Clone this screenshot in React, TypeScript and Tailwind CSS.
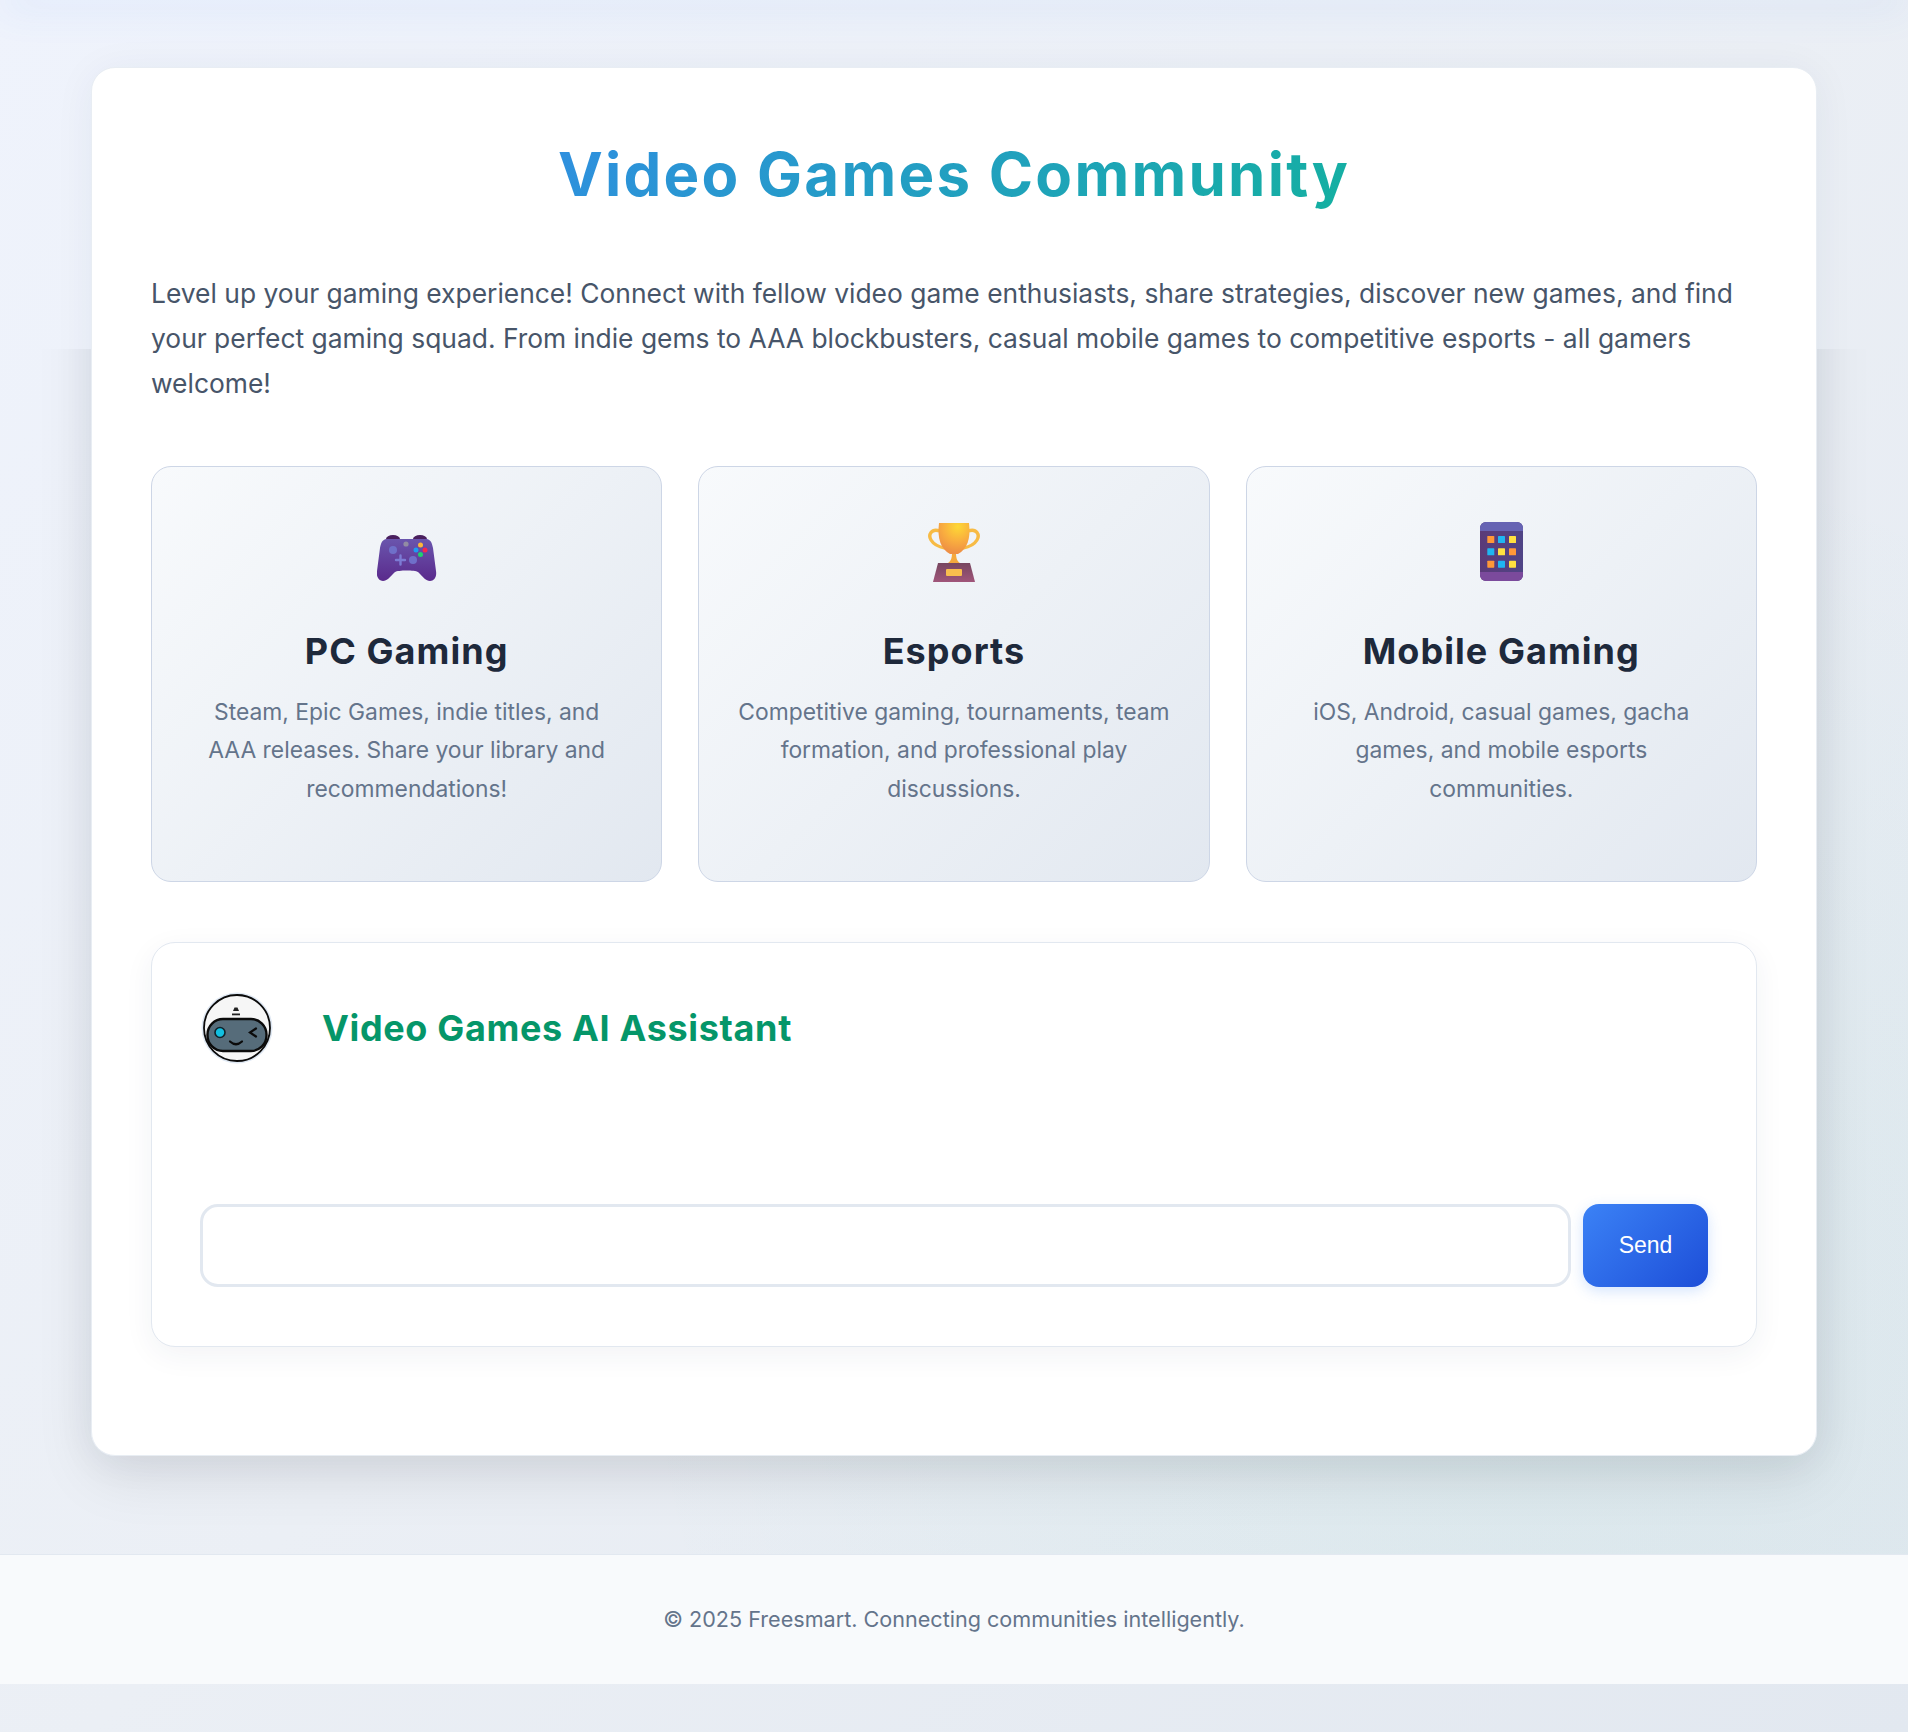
const sans = "font-['Inter',sans-serif]";

function GamepadIcon() {
  return (
    <svg viewBox="0 0 60 47" className="h-[47px] w-[60px]">
      <defs>
        <linearGradient id="padBody" x1="0" y1="0" x2="0" y2="1">
          <stop offset="0" stopColor="#6a55ad" />
          <stop offset="1" stopColor="#5a2a8c" />
        </linearGradient>
      </defs>
      <ellipse cx="16" cy="4" rx="7" ry="4" fill="#4a1f5e" />
      <ellipse cx="43" cy="4" rx="7" ry="4" fill="#4a1f5e" />
      <path
        d="M9 4 H50 C54 5 55 8 56 13 L59 36 C60 42 57 46 53 46 C49 46 46 42 41 37 C38 35 21 35 18 37 C13 42 10 46 6 46 C2 46 -1 42 0 36 L3 13 C4 8 5 5 9 4 Z"
        fill="url(#padBody)"
      />
      <circle cx="16" cy="15" r="4" fill="#6f70c9" />
      <circle cx="29" cy="9" r="2.6" fill="#928ca3" />
      <circle cx="36" cy="25" r="4" fill="#6f70c9" />
      <path d="M23.5 20.5 V29.5 M19 25 H28" stroke="#7c7bd4" strokeWidth="2.4" strokeLinecap="round" />
      <circle cx="43.5" cy="10" r="2.5" fill="#fcb73a" />
      <circle cx="39" cy="15" r="2.5" fill="#1f9bf0" />
      <circle cx="48" cy="15" r="2.5" fill="#f8254f" />
      <circle cx="43.5" cy="19.5" r="2.5" fill="#1fd16f" />
    </svg>
  );
}

function TrophyIcon() {
  return (
    <svg viewBox="0 0 66 64" className="h-[64px] w-[66px]">
      <defs>
        <radialGradient id="cup" cx="0.62" cy="0.12" r="0.85">
          <stop offset="0" stopColor="#fdd835" />
          <stop offset="0.55" stopColor="#f9ae3f" />
          <stop offset="1" stopColor="#ee8f45" />
        </radialGradient>
        <linearGradient id="plinth" x1="0" y1="0" x2="0" y2="1">
          <stop offset="0" stopColor="#77465f" />
          <stop offset="1" stopColor="#a0557a" />
        </linearGradient>
      </defs>
      <path d="M19 10 C10 7 7 14 10 19 C13 24 18 26 24 27" fill="none" stroke="#f7bb45" strokeWidth="3.4" />
      <path d="M47 10 C56 7 59 14 56 19 C53 24 48 26 42 27" fill="none" stroke="#f7bb45" strokeWidth="3.4" />
      <path d="M25 43 C30 41 31 37 31 32 H35 C35 37 36 41 41 43 Z" fill="#f5a83d" />
      <path d="M18 2 H48 C50 18 46 28 37 33 H29 C20 28 16 18 18 2 Z" fill="url(#cup)" />
      <path d="M17 42 H49 L54 61 H12 Z" fill="url(#plinth)" />
      <rect x="25" y="48" width="16" height="7" rx="1" fill="#f9bd4e" />
    </svg>
  );
}

function TabletIcon() {
  const cells = [
    ["#ff9838", "#1fb6f2", "#ffe040"],
    ["#1fb6f2", "#ffe040", "#ff9838"],
    ["#ff9838", "#1fb6f2", "#ffe040"],
  ];
  const xs = [7.3, 18, 29];
  const ys = [14, 26.3, 38.7];
  return (
    <svg viewBox="0 0 43 59" className="h-[59px] w-[43px]">
      <defs>
        <linearGradient id="slate" x1="0" y1="0" x2="1" y2="0">
          <stop offset="0" stopColor="#5b3a78" />
          <stop offset="1" stopColor="#4f4486" />
        </linearGradient>
        <clipPath id="slateClip">
          <rect width="43" height="59" rx="6" />
        </clipPath>
      </defs>
      <g clipPath="url(#slateClip)">
        <rect width="43" height="59" fill="url(#slate)" />
        <rect width="43" height="9" fill="#6663b3" />
        <rect y="50" width="43" height="9" fill="#7b4a9c" />
      </g>
      {cells.map((row, r) =>
        row.map((color, c) => (
          <rect key={`${r}-${c}`} x={xs[c]} y={ys[r]} width="7" height="7" rx="0.6" fill={color} />
        )),
      )}
    </svg>
  );
}

function BotAvatar() {
  return (
    <svg viewBox="0 0 72 72" className="h-[72px] w-[72px]">
      <circle cx="36" cy="36" r="35.5" fill="#dfe8f3" />
      <circle cx="36" cy="36" r="33" fill="#f6f6f6" stroke="#0b0b0b" strokeWidth="1.8" />
      <path d="M33.5 15.5 H36.5 L38 19 H32 Z" fill="#222" />
      <rect x="31" y="21.5" width="8" height="1.8" fill="#222" />
      <rect x="6.5" y="27" width="59" height="32" rx="15.5" fill="#566c7a" stroke="#0b0b0b" strokeWidth="2.4" />
      <circle cx="19" cy="40.5" r="5" fill="#12bfe0" stroke="#10222b" strokeWidth="1.6" />
      <path d="M55 36.5 L49 40.5 L55 44.5" fill="none" stroke="#0b0b0b" strokeWidth="2.2" strokeLinecap="round" />
      <path d="M29 49.5 Q35 55 41 49.5" fill="none" stroke="#0b0b0b" strokeWidth="2.2" strokeLinecap="round" />
    </svg>
  );
}

const features = [
  {
    icon: <GamepadIcon />,
    title: "PC Gaming",
    text: "Steam, Epic Games, indie titles, and AAA releases. Share your library and recommendations!",
    iconClass: "pt-[14px]",
  },
  {
    icon: <TrophyIcon />,
    title: "Esports",
    text: "Competitive gaming, tournaments, team formation, and professional play discussions.",
    iconClass: "pt-0",
  },
  {
    icon: <TabletIcon />,
    title: "Mobile Gaming",
    text: "iOS, Android, casual games, gacha games, and mobile esports communities.",
    iconClass: "pt-px",
  },
];

export default function App() {
  return (
    <div className={`${sans} relative min-h-[1732px] bg-[linear-gradient(135deg,#eff3fc_0%,#ebeff5_50%,#e2e8f0_100%)]`}>
      <div className="absolute -top-[10px] left-0 h-[10px] w-full shadow-[0_4px_40px_rgba(59,130,246,0.2)]" />
      <div className="bg-[radial-gradient(circle_at_80%_85%,rgba(16,185,129,0.05),transparent_45%)] px-[91px] pb-[98px] pt-[67px]">
        <div className="relative">
          <div className="absolute inset-0 rounded-[24px] shadow-[0_20px_60px_rgba(0,0,0,0.09)] [clip-path:inset(282px_-120px_-120px_-120px_round_0)]" />
          <main className="relative h-[1389px] rounded-[24px] border border-[#e8edf3] bg-white px-[59px] pt-[64px] shadow-[0_4px_40px_rgba(30,50,90,0.06)]">
            <div className="text-center">
              <h1 className="inline-block bg-[linear-gradient(135deg,#2f8fe0,#14b0a0)] bg-clip-text text-[60px] font-bold leading-[84px] tracking-[2.25px] text-transparent">
                Video Games Community
              </h1>
            </div>
            <p className="mt-[55px] text-[26.4px] leading-[45px] text-[#475569]">
              Level up your gaming experience! Connect with fellow video game enthusiasts, share strategies, discover new
              games, and find your perfect gaming squad. From indie gems to AAA blockbusters, casual mobile games to
              competitive esports - all gamers welcome!
            </p>

            <div className="mt-[60px] grid grid-cols-3 gap-[36px]">
              {features.map((f) => (
                <section
                  key={f.title}
                  className="flex h-[416px] flex-col items-center rounded-[20px] border border-[#cdd6e6] bg-[linear-gradient(135deg,#f8fafc,#e2e8f0)] px-[38px] pt-[54px] text-center"
                >
                  <div className={`h-[64px] ${f.iconClass}`}>{f.icon}</div>
                  <h3 className="mt-[40px] text-[36px] font-bold leading-[52px] tracking-[1.05px] text-[#1e293b]">
                    {f.title}
                  </h3>
                  <p className="mt-[16px] text-[22.85px] leading-[38.4px] text-[#64748b]">{f.text}</p>
                </section>
              ))}
            </div>

            <section className="mt-[60px] h-[405px] rounded-[24px] border border-[#e2e8f0] bg-white px-[48px] pt-[49px] shadow-[0_8px_30px_rgba(30,50,90,0.06)]">
              <div className="ml-px flex items-center gap-[49px]">
                <BotAvatar />
                <h2 className="text-[36px] font-bold leading-[52px] tracking-[0.65px] text-[#059669]">
                  Video Games AI Assistant
                </h2>
              </div>
              <div className="mt-[140px] flex gap-[12px]">
                <input
                  aria-label="Message"
                  className="h-[83px] min-w-0 flex-1 rounded-[18px] border-[3px] border-[#e2e8f0] bg-white outline-none"
                />
                <button className="h-[83px] w-[125px] rounded-[16px] bg-[linear-gradient(135deg,#3b82f6,#1d4ed8)] font-['Liberation_Sans',sans-serif] text-[23px] text-white shadow-[0_4px_14px_rgba(59,130,246,0.22)]">
                  Send
                </button>
              </div>
            </section>
          </main>
        </div>
      </div>
      <footer className="h-[130px] border-t border-[#e2e8f0] bg-[#f8fafc] pt-[48px] text-center text-[21.6px] leading-[32px] text-[#64748b]">
        © 2025 Freesmart. Connecting communities intelligently.
      </footer>
    </div>
  );
}
